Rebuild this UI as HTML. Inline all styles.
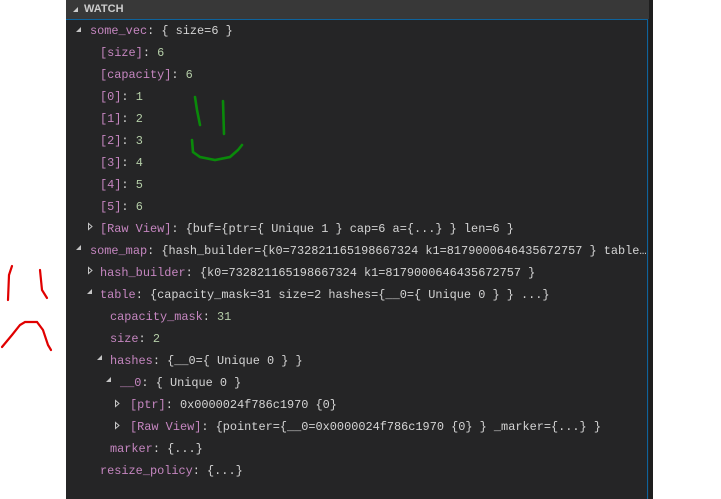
<!DOCTYPE html>
<html><head><meta charset="utf-8"><style>
body{margin:0;width:721px;height:499px;background:#fff;position:relative;overflow:hidden;font-family:"Liberation Mono",monospace}
#panel{position:absolute;left:66px;top:0;width:587px;height:499px;background:#252526}
#hdr{position:absolute;left:0;top:0;width:587px;height:19px;background:#383838;color:#ccc;font:bold 11px "Liberation Sans",sans-serif;line-height:19px}
#hdr span{position:absolute;left:18px}
#focus{position:absolute;left:0;top:19px;width:582px;height:480px;border-top:1px solid #0e639c;border-right:1px solid #0e639c;box-sizing:border-box}
#sb{position:absolute;left:583px;top:0;width:4px;height:499px;background:#1e1e1e}
.r{position:absolute;height:22px;line-height:22px;font-size:11.9px;color:#d4d4d4;white-space:pre}
.n{color:#c586c0}.v{color:#b5cea8}
.a{position:absolute;width:8px;height:8px}
</style></head><body>
<div id="panel">
<div id="hdr"><svg class="a" style="left:6px;top:6px" viewBox="0 0 8 8"><path d="M6 1V6H1Z" fill="#ccc"/></svg><span>WATCH</span></div>
<div id="focus"></div><div id="sb"></div>
</div>
<svg style="position:absolute;left:0;top:0" width="721" height="499">
<g fill="#c5c5c5">
<path d="M81 27v5h-5z"/>
<path d="M81 245v5h-5z"/>
<path d="M92 289v5h-5z"/>
<path d="M102 355v5h-5z"/>
<path d="M111 377v5h-5z"/>
</g>
<g fill="none" stroke="#c5c5c5" stroke-width="1">
<path d="M88.5 223.5v6l3.5-3z"/>
<path d="M88.5 267.5v6l3.5-3z"/>
<path d="M115.5 400.5v6l3.5-3z"/>
<path d="M115.5 422.5v6l3.5-3z"/>
</g>
<g fill="none" stroke="#0a8a0a" stroke-width="2.6" stroke-linecap="round">
<path d="M195 97L197 110L200 125"/>
<path d="M223 101L224 134"/>
<path d="M192 140L193 152L200 157L215 160L230 157L238 150L242 145"/>
</g>
<g fill="none" stroke="#e00000" stroke-width="2.2" stroke-linecap="round">
<path d="M12 266L9 275L8 300"/>
<path d="M40 270L42 290L47 298"/>
<path d="M2 347L12 335L20 325L25 322L37 322L43 330L48 345L51 350"/>
</g>
</svg>
<div class="r" style="left:90px;top:20px"><span class="n">some_vec</span>: { size=6 }</div>
<div class="r" style="left:100px;top:42px"><span class="n">[size]</span>: <span class="v">6</span></div>
<div class="r" style="left:100px;top:64px"><span class="n">[capacity]</span>: <span class="v">6</span></div>
<div class="r" style="left:100px;top:86px"><span class="n">[0]</span>: <span class="v">1</span></div>
<div class="r" style="left:100px;top:108px"><span class="n">[1]</span>: <span class="v">2</span></div>
<div class="r" style="left:100px;top:130px"><span class="n">[2]</span>: <span class="v">3</span></div>
<div class="r" style="left:100px;top:152px"><span class="n">[3]</span>: <span class="v">4</span></div>
<div class="r" style="left:100px;top:174px"><span class="n">[4]</span>: <span class="v">5</span></div>
<div class="r" style="left:100px;top:196px"><span class="n">[5]</span>: <span class="v">6</span></div>
<div class="r" style="left:100px;top:218px"><span class="n">[Raw View]</span>: {buf={ptr={ Unique 1 } cap=6 a={...} } len=6 }</div>
<div class="r" style="left:90px;top:240px;width:558px;overflow:hidden"><span class="n">some_map</span>: {hash_builder={k0=732821165198667324 k1=8179000646435672757 } table…</div>
<div class="r" style="left:100px;top:262px"><span class="n">hash_builder</span>: {k0=732821165198667324 k1=8179000646435672757 }</div>
<div class="r" style="left:100px;top:284px"><span class="n">table</span>: {capacity_mask=31 size=2 hashes={__0={ Unique 0 } } ...}</div>
<div class="r" style="left:110px;top:306px"><span class="n">capacity_mask</span>: <span class="v">31</span></div>
<div class="r" style="left:110px;top:328px"><span class="n">size</span>: <span class="v">2</span></div>
<div class="r" style="left:110px;top:350px"><span class="n">hashes</span>: {__0={ Unique 0 } }</div>
<div class="r" style="left:120px;top:372px"><span class="n">__0</span>: { Unique 0 }</div>
<div class="r" style="left:130px;top:394px"><span class="n">[ptr]</span>: 0x0000024f786c1970 {0}</div>
<div class="r" style="left:130px;top:416px"><span class="n">[Raw View]</span>: {pointer={__0=0x0000024f786c1970 {0} } _marker={...} }</div>
<div class="r" style="left:110px;top:438px"><span class="n">marker</span>: {...}</div>
<div class="r" style="left:100px;top:460px"><span class="n">resize_policy</span>: {...}</div>
</body></html>
